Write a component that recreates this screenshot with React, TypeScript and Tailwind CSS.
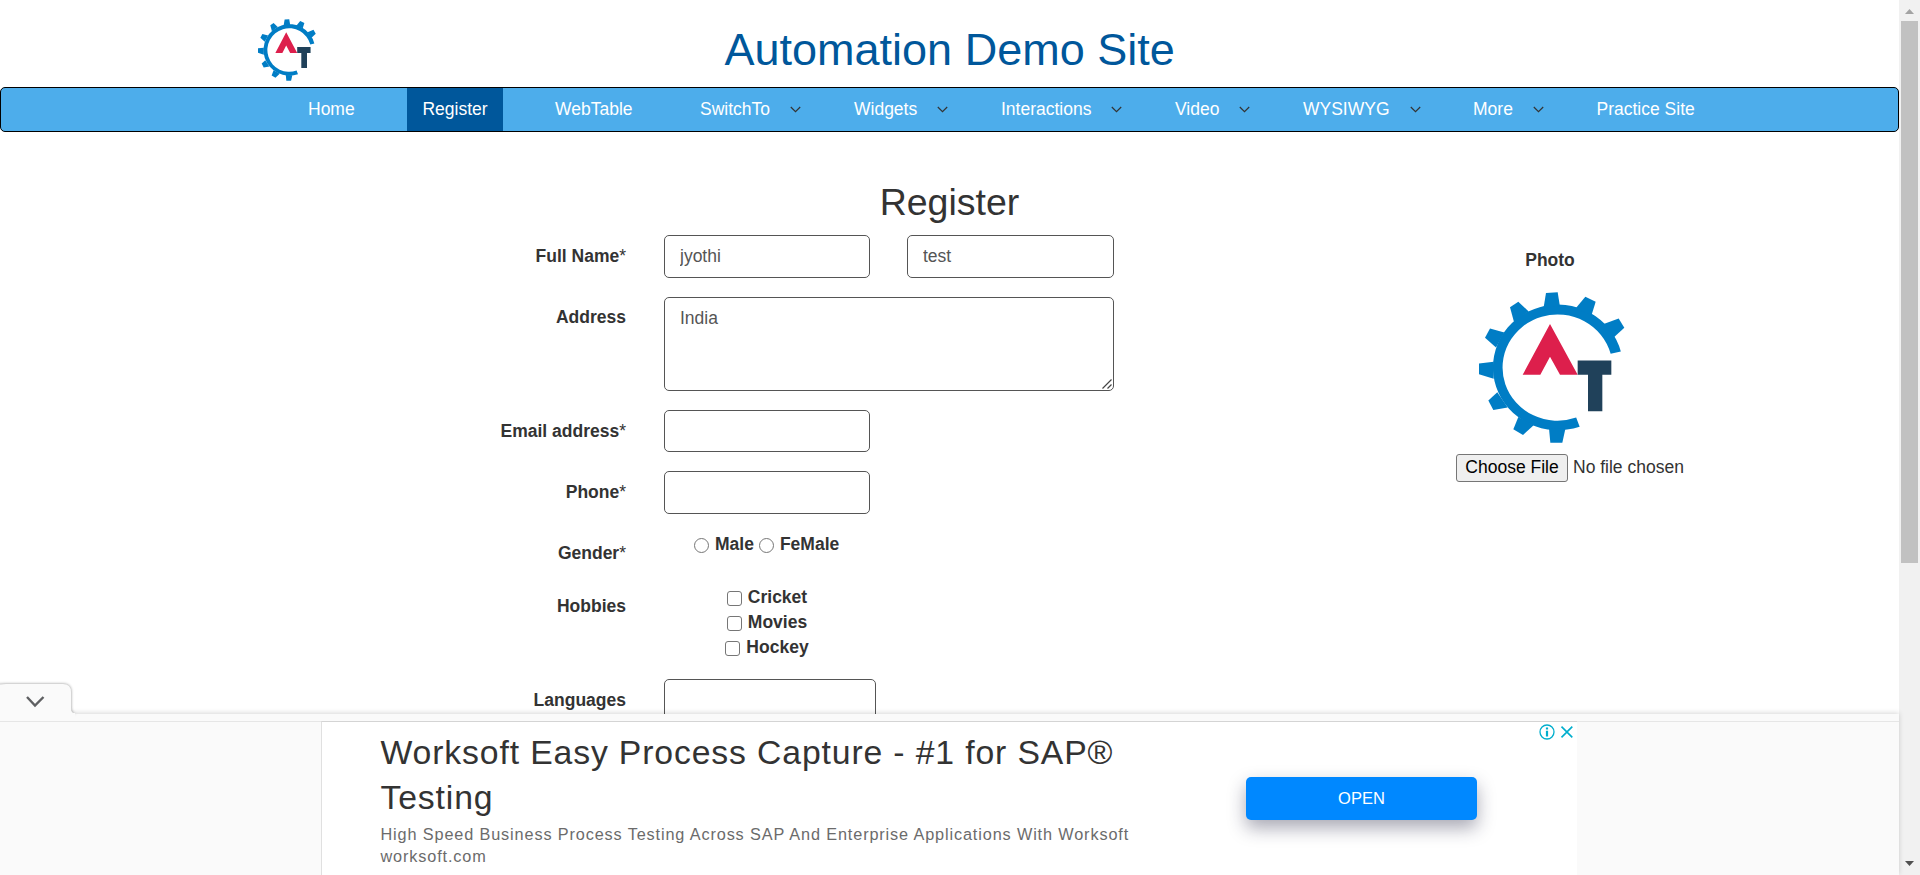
import React from "react";

function Logo({ className }: { className: string }) {
  return (
    <svg viewBox="118 170 438 452" preserveAspectRatio="none" className={className}>
      <path
        d="M513 355 A165 159 0 1 0 409.5 546 L420 573 A195 188 0 1 1 543.5 348 Z"
        fill="#007dc5"
      />
      <g fill="#007dc5">
        <path d="M319 173 354 171 361 214 312 216Z" />
        <path d="M437 184 468 199 456 238 407 220Z" />
        <path d="M537 249 554 277 522 306 492 266Z" />
        <path d="M236 199 211 216 223 260 267 228Z" />
        <path d="M151 279 136 307 169 336 194 291Z" />
        <path d="M118 384V416L162 430V379Z" />
        <path d="M146 495 161 523 204 516 173 470Z" />
        <path d="M221 581 250 598 282 569 236 544Z" />
        <path d="M328 578 332 621H368L377 580Z" />
      </g>
      <path d="M331 266 249 418H302L331 364 361 418H414Z" fill="#dd1f4c" />
      <path d="M414 375H515V418H488V527H445V418H414Z" fill="#20415a" />
    </svg>
  );
}

function Caret() {
  return (
    <svg viewBox="0 0 11 7" className="ml-[20px] h-[7px] w-[11px] shrink-0" fill="none" stroke="#333" strokeWidth="1.2">
      <path d="M.8 1 5.5 5.7 10.2 1" />
    </svg>
  );
}

const navItems = [
  { label: "Home", size: "w-[115px]" },
  { label: "Register", size: "w-[132px]", active: true },
  { label: "WebTable", size: "w-[145px]" },
  { label: "SwitchTo", size: "w-[154px]", menu: true },
  { label: "Widgets", size: "w-[147px]", menu: true },
  { label: "Interactions", size: "w-[174px]", menu: true },
  { label: "Video", size: "w-[128px]", menu: true },
  { label: "WYSIWYG", size: "w-[170px]", menu: true },
  { label: "More", size: "w-[123.5px]", menu: true },
  { label: "Practice Site", size: "w-[160px]" },
];

function Navbar() {
  return (
    <nav className="flex h-[45px] rounded-[5px] border border-black bg-[#4dadeb] pl-[291px] text-white">
      {navItems.map((item) => (
        <div key={item.label} className={"shrink-0 " + item.size}>
          <a
            className={
              item.active
                ? "flex h-full w-24 items-center justify-center bg-[#00579b]"
                : "flex h-full items-center whitespace-nowrap pl-4"
            }
          >
            {item.label}
            {item.menu && <Caret />}
          </a>
        </div>
      ))}
    </nav>
  );
}

interface RowProps {
  label: string;
  size: string;
  offset?: string;
  children?: React.ReactNode;
}

function Row({ label, size, offset = "pt-[9px]", children }: RowProps) {
  const required = label.endsWith("*");
  return (
    <div className={"flex " + size}>
      <label className={"w-[626px] text-right font-bold leading-[25px] " + offset}>
        {required ? label.slice(0, -1) : label}
        {required && <span className="font-normal">*</span>}
      </label>
      <div className="ml-[38px] flex">{children}</div>
    </div>
  );
}

const field =
  "block rounded-[5px] border border-[#555] bg-white px-[15px] text-[#555] outline-none";

function Choice({ type, label }: { type: "radio" | "checkbox"; label: string }) {
  return (
    <label className="flex items-center font-bold leading-[25px]">
      <input
        type={type}
        className={
          type === "radio"
            ? "mr-[6px] mt-[2px] size-[15px] appearance-none rounded-full border border-[#767676] bg-white"
            : "mr-[6px] mt-px size-[15px] appearance-none rounded-[3px] border border-[#767676] bg-white"
        }
      />
      {label}
    </label>
  );
}

function RegisterForm() {
  return (
    <div className="flex">
      <div className="w-[1114px] shrink-0">
        <Row label="Full Name*" size="h-[62px]">
          <input className={field + " h-[43px] w-[206px]"} defaultValue="jyothi" />
          <input className={field + " ml-[37px] h-[43px] w-[207px]"} defaultValue="test" />
        </Row>
        <Row label="Address" size="h-[113px]" offset="pt-[8px]">
          <div className="relative h-[94px] w-[450px]">
            <textarea className={field + " h-full w-full resize-none py-[8px] leading-[25px]"} defaultValue="India" />
            <svg viewBox="0 0 12 12" className="absolute bottom-[1px] right-[1px] size-3" fill="none" stroke="#444" strokeWidth="1.2">
              <path d="M1.5 10.5 10.5 1.5M6.5 10.5 10.5 6.5" />
            </svg>
          </div>
        </Row>
        <Row label="Email address*" size="h-[61px]">
          <input className={field + " h-[42px] w-[206px]"} />
        </Row>
        <Row label="Phone*" size="h-[61px]">
          <input className={field + " h-[43px] w-[206px]"} />
        </Row>
        <Row label="Gender*" size="h-[53px]">
          <div className="flex gap-[5px] self-start pl-[30px]">
            <Choice type="radio" label="Male" />
            <Choice type="radio" label="FeMale" />
          </div>
        </Row>
        <Row label="Hobbies" size="h-[94px]">
          <div className="flex w-[206px] flex-col items-center">
            <Choice type="checkbox" label="Cricket" />
            <Choice type="checkbox" label="Movies" />
            <Choice type="checkbox" label="Hockey" />
          </div>
        </Row>
        <Row label="Languages" size="h-[62px]">
          <div className="h-[45px] w-[212px] rounded-[5px] border border-[#555]" />
        </Row>
      </div>
      <div className="ml-[342px] flex w-[240px] flex-col pt-[13px]">
        <div className="w-[188px] text-center font-bold leading-[25px]">Photo</div>
        <Logo className="ml-[23px] mt-[19px] h-[151px] w-[146px]" />
        <div className="mt-[11px] flex items-center">
          <button className="h-[28px] w-[112px] rounded-[3px] border border-[#767676] bg-[#efefef] pb-[2px] leading-[24px] text-black">
            Choose File
          </button>
          <span className="ml-[5px] pb-[2px] leading-[26px]">No file chosen</span>
        </div>
      </div>
    </div>
  );
}

function AdBanner() {
  return (
    <div className="absolute bottom-0 left-0 w-[1899px]">
      <div className="h-[161px] bg-[#fafafa] pt-[7px] shadow-[0_-1px_5px_rgba(0,0,0,.16)]">
        <div className="flex h-[154px]">
          <div className="w-[321px] border-t border-[#e6e6e6]" />
          <div className="flex w-[1256px] border-l border-t border-l-[#e0e0e0] border-t-[#d4d4d4] bg-white">
            <div className="ml-[58.5px] w-[780px] pt-[8px]">
              <div className="text-[33.75px] leading-[45px] tracking-[0.86px] text-[#333]">
                Worksoft Easy Process Capture - #1 for SAP® Testing
              </div>
              <div className="mt-[3px] whitespace-nowrap text-[16.25px] leading-[22px] tracking-[0.87px] text-[#6b6b6b]">
                High Speed Business Process Testing Across SAP And Enterprise Applications With Worksoft
                <br />
                worksoft.com
              </div>
            </div>
            <button className="ml-[85.5px] mt-[55px] h-[43px] w-[231px] rounded-[5px] bg-[#0088ff] text-[16.5px] text-white shadow-[0_8px_18px_rgba(30,30,60,.38)]">
              OPEN
            </button>
            <svg viewBox="0 0 36 16" className="ml-[62px] mt-[1.5px] h-4 w-9" fill="none" stroke="#00aecd">
              <circle cx="8" cy="8" r="7" strokeWidth="1.3" />
              <path d="M8 3.4V5.5M8 6.7V12.4" strokeWidth="2.2" />
              <path d="M22.5 2.6 33.3 13.4M33.3 2.6 22.5 13.4" strokeWidth="1.6" />
            </svg>
          </div>
          <div className="flex-1 border-t border-[#e6e6e6]" />
        </div>
      </div>
      <svg viewBox="0 0 90 38" className="absolute -top-[38px] left-0 h-[38px] w-[90px] overflow-visible">
        <path
          d="M-10 38V14Q-8 8 6 8H63Q71 8 71 16V32Q71 38 77 38Z"
          fill="#fafafa"
          className="[filter:drop-shadow(0_0_1.5px_rgba(0,0,0,.45))]"
        />
        <path d="M0 37H75V44H0Z" fill="#fafafa" />
        <path d="M27 21 35 29.5 43.5 21" fill="none" stroke="#5f6062" strokeWidth="2.4" />
      </svg>
    </div>
  );
}

function Scrollbar() {
  return (
    <div className="flex w-[21px] shrink-0 flex-col items-center bg-[#f1f1f1]">
      <svg viewBox="0 0 9 5" className="mt-[9px] h-[5px] w-[9px]"><path d="M0 5 4.5 0 9 5Z" fill="#a3a3a3" /></svg>
      <div className="mt-[7px] h-[542px] w-[17px] bg-[#c1c1c1]" />
      <svg viewBox="0 0 9 5" className="mb-[9px] mt-auto h-[5px] w-[9px]"><path d="M0 0 4.5 5 9 0Z" fill="#505050" /></svg>
    </div>
  );
}

export default function App() {
  return (
    <div className="relative flex h-[875px] w-[1920px] overflow-hidden bg-white font-['Liberation_Sans',Arial,sans-serif] text-[17.5px] leading-[25px] text-[#333]">
      <div className="w-[1899px] shrink-0">
        <header className="flex h-[87px] items-start pl-[258px]">
          <Logo className="mt-[19px] h-[62px] w-[58px]" />
          <h1 className="ml-[408.5px] mt-[25px] text-[45px] leading-[50px] text-[#00579b]">Automation Demo Site</h1>
        </header>
        <Navbar />
        <h2 className="mb-[12px] mt-[50px] text-center text-[37.5px] leading-[41px]">Register</h2>
        <RegisterForm />
      </div>
      <Scrollbar />
      <AdBanner />
    </div>
  );
}
